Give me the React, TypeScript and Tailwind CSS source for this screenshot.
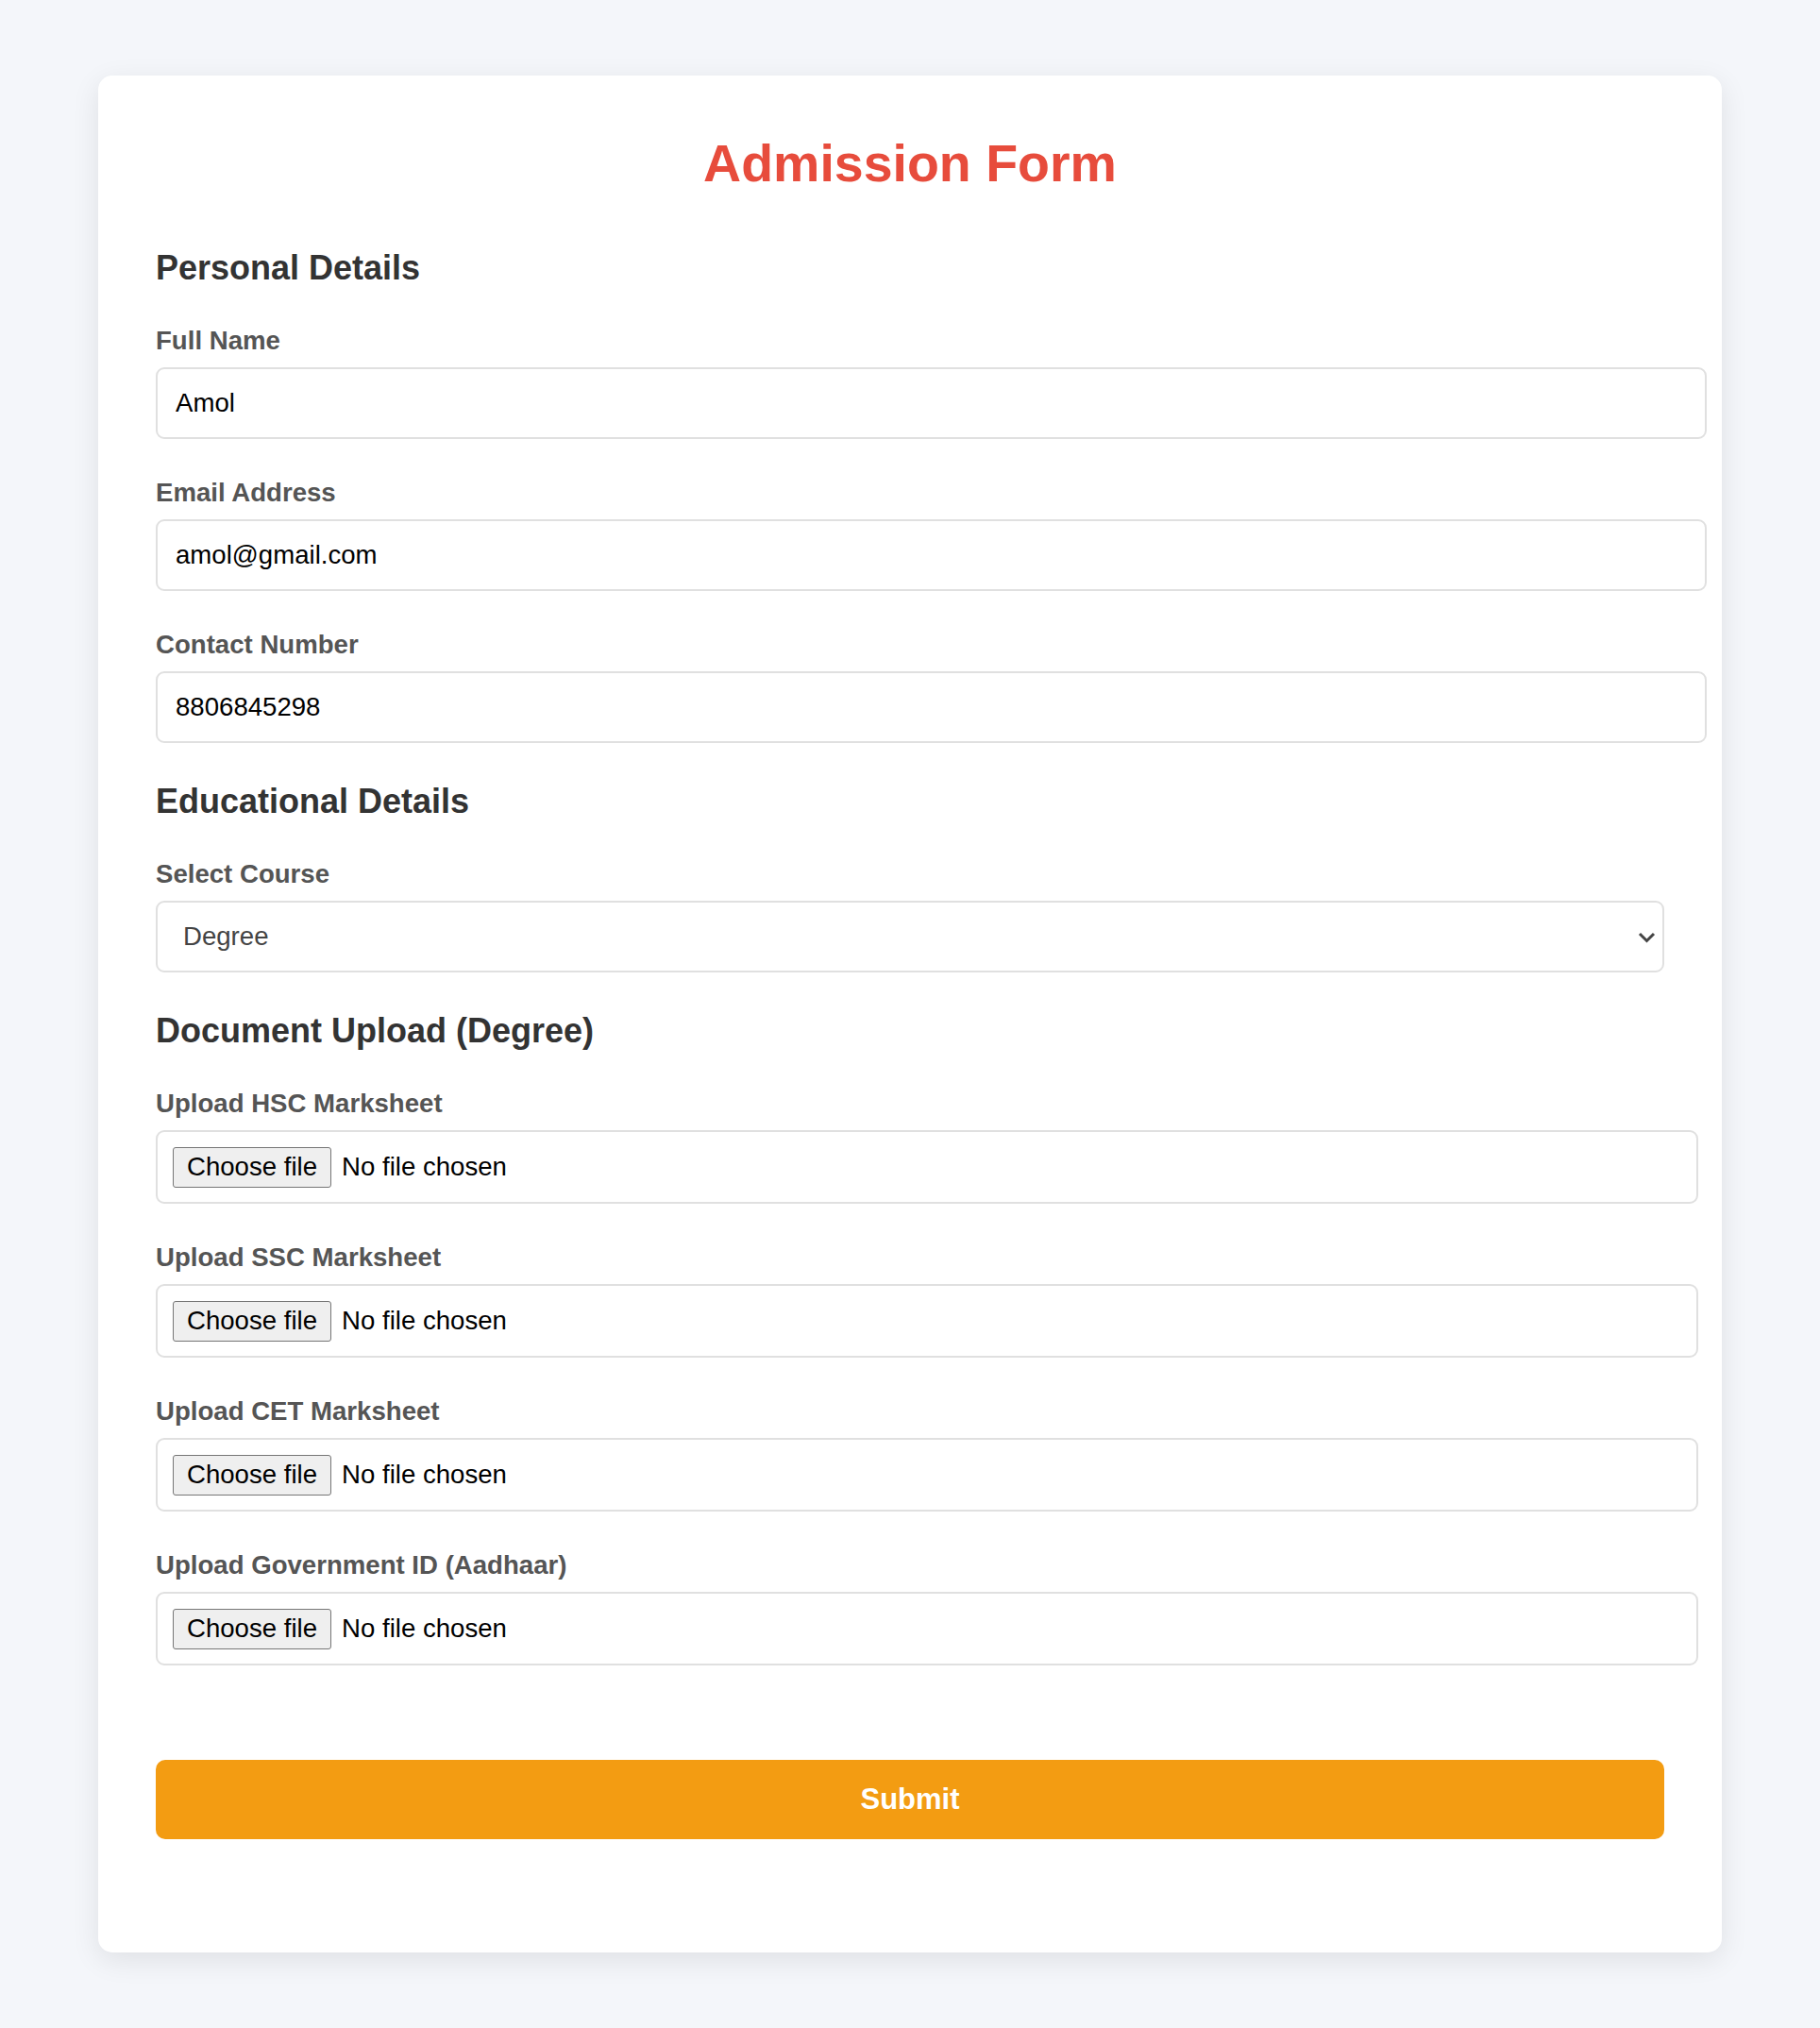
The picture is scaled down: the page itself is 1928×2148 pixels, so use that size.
import { useState } from "react";

const campos = [
  { id: "nome", label: "Full Name", type: "text", valor: "Amol" },
  { id: "email", label: "Email Address", type: "email", valor: "amol@gmail.com" },
  { id: "telefone", label: "Contact Number", type: "tel", valor: "8806845298" },
];

const documentos = [
  "Upload HSC Marksheet",
  "Upload SSC Marksheet",
  "Upload CET Marksheet",
  "Upload Government ID (Aadhaar)",
];

function Titulo({ children, className = "" }: { children: string; className?: string }) {
  return (
    <h2 className={`mb-[41px] text-[36px] font-bold leading-[41px] text-[#333] ${className}`}>
      {children}
    </h2>
  );
}

function Rotulo({ children, htmlFor }: { children: string; htmlFor: string }) {
  return (
    <label
      htmlFor={htmlFor}
      className="mb-[12px] block text-[27.6px] font-bold leading-[32px] text-[#555]"
    >
      {children}
    </label>
  );
}

export default function App() {
  const [valores, setValores] = useState<Record<string, string>>(
    Object.fromEntries(campos.map((c) => [c.id, c.valor])),
  );
  const [curso, setCurso] = useState("Degree");
  const [arquivos, setArquivos] = useState<Record<number, string>>({});

  return (
    <div
      className="min-h-screen bg-[#f4f6fa] py-[80px]"
      style={{ fontFamily: '"Liberation Sans", Arial, sans-serif' }}
    >
      <form
        onSubmit={(e) => e.preventDefault()}
        className="mx-auto w-[1720px] rounded-[15px] bg-white px-[61px] pb-[120px] pt-[61px] shadow-[0_8px_30px_rgba(0,0,0,0.09)]"
      >
        <h1 className="text-center text-[55.5px] font-bold leading-[64px] text-[#e74c3c]">
          Admission Form
        </h1>

        <Titulo className="mt-[58px]">Personal Details</Titulo>
        {campos.map((c) => (
          <div key={c.id} className="mb-[41px]">
            <Rotulo htmlFor={c.id}>{c.label}</Rotulo>
            <input
              id={c.id}
              type={c.type}
              value={valores[c.id]}
              onChange={(e) => setValores({ ...valores, [c.id]: e.target.value })}
              className="block h-[76px] w-[1643px] rounded-[9px] border-2 border-[#e0e0e0] bg-white px-[19px] text-[27.6px] text-black outline-none"
            />
          </div>
        ))}

        <Titulo>Educational Details</Titulo>
        <div className="mb-[41px]">
          <Rotulo htmlFor="curso">Select Course</Rotulo>
          <div className="relative">
            <select
              id="curso"
              value={curso}
              onChange={(e) => setCurso(e.target.value)}
              className="block h-[76px] w-full appearance-none rounded-[9px] border-2 border-[#e0e0e0] bg-white pl-[27px] text-[27.6px] text-[#444] outline-none"
            >
              <option>Degree</option>
              <option>Diploma</option>
              <option>Engineering</option>
            </select>
            <svg
              className="pointer-events-none absolute right-[9px] top-[33px]"
              width="19"
              height="12"
              viewBox="0 0 19 12"
              fill="none"
            >
              <path d="M2 2l7.5 7.5L17 2" stroke="#444" strokeWidth="3" />
            </svg>
          </div>
        </div>

        <Titulo>Document Upload ({curso})</Titulo>
        {documentos.map((d, i) => (
          <div key={d} className="mb-[41px]">
            <Rotulo htmlFor={`doc-${i}`}>{d}</Rotulo>
            <label className="flex h-[78px] w-[1634px] cursor-pointer items-center rounded-[9px] border-2 border-[#e0e0e0] bg-white px-[16px] text-[27.6px] text-black">
              <input
                id={`doc-${i}`}
                type="file"
                className="sr-only"
                onChange={(e) =>
                  setArquivos({ ...arquivos, [i]: e.target.files?.[0]?.name ?? "" })
                }
              />
              <span className="flex h-[43px] items-center rounded-[3px] border border-[#767676] bg-[#efefef] px-[14px] leading-none">
                Choose file
              </span>
              <span className="ml-[11px]">{arquivos[i] || "No file chosen"}</span>
            </label>
          </div>
        ))}

        <button
          type="submit"
          className="mt-[100px] block h-[84px] w-full rounded-[10px] bg-[#f39c12] text-[31px] font-bold text-white"
        >
          Submit
        </button>
      </form>
    </div>
  );
}
